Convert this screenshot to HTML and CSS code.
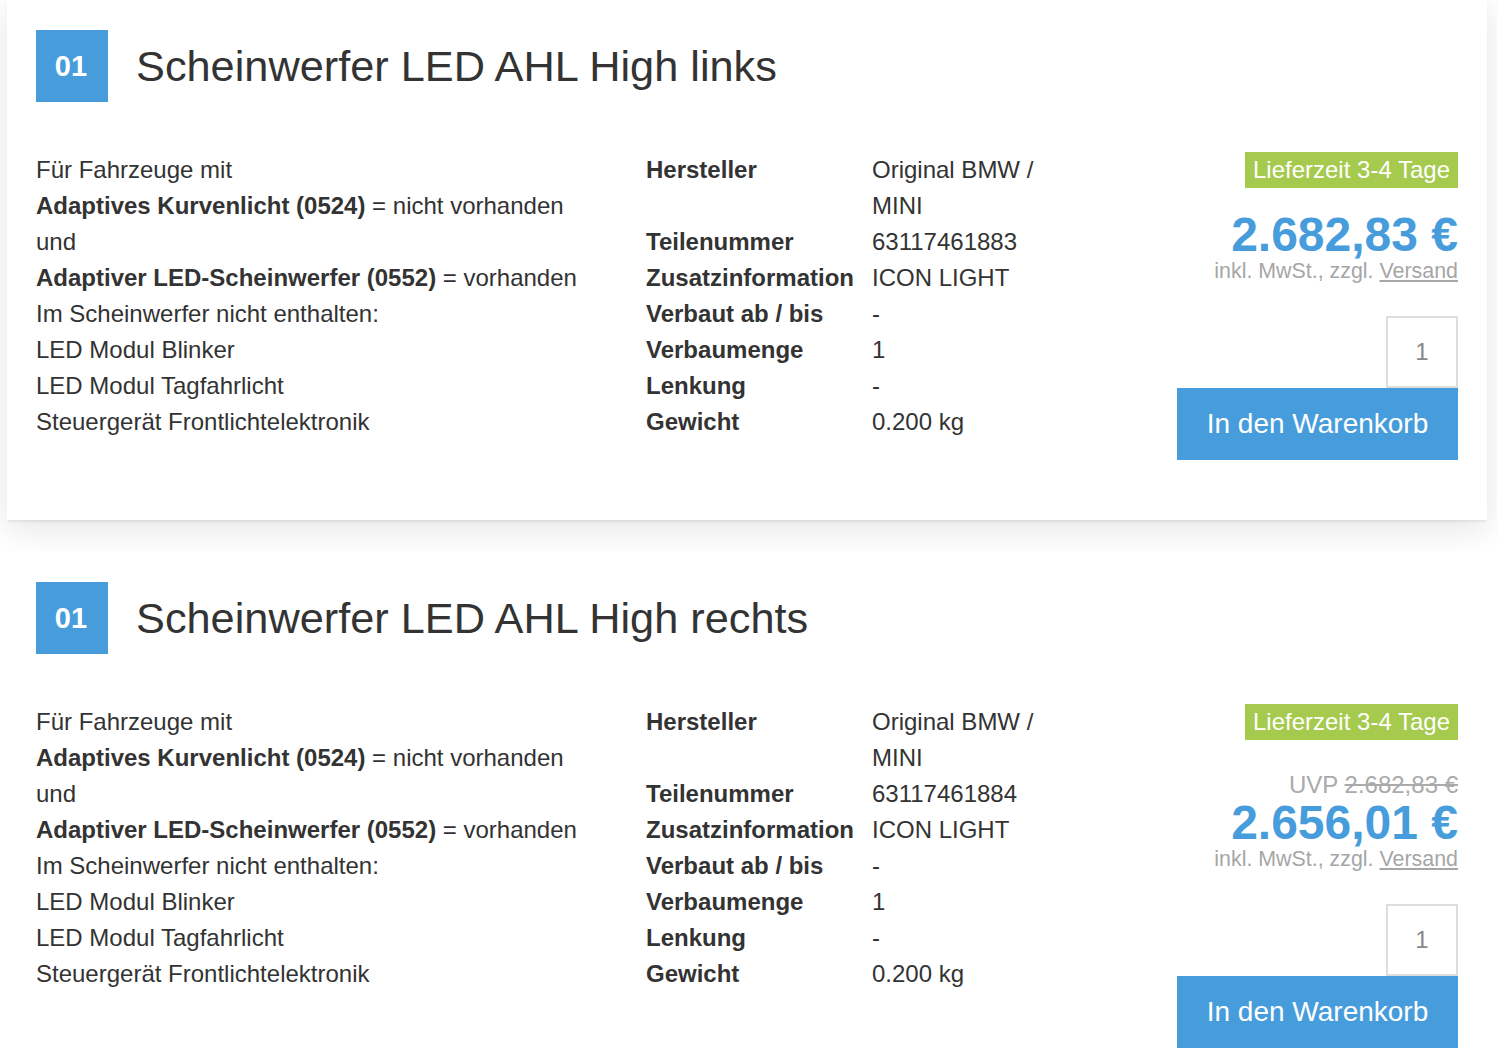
FILE: index.html
```html
<!DOCTYPE html>
<html lang="de">
<head>
<meta charset="utf-8">
<title>Scheinwerfer</title>
<link rel="stylesheet" href="styles.css">
</head>
<body>
<div class="list">
  <article class="card card-active">
    <header class="card-head">
      <div class="num">01</div>
      <h2 class="title">Scheinwerfer LED AHL High links</h2>
    </header>
    <div class="card-body">
      <div class="desc">
        <div>Für Fahrzeuge mit</div>
        <div><b>Adaptives Kurvenlicht (0524)</b> = nicht vorhanden</div>
        <div>und</div>
        <div><b>Adaptiver LED-Scheinwerfer (0552)</b> = vorhanden</div>
        <div>Im Scheinwerfer nicht enthalten:</div>
        <div>LED Modul Blinker</div>
        <div>LED Modul Tagfahrlicht</div>
        <div>Steuergerät Frontlichtelektronik</div>
      </div>
      <div class="specs">
        <div class="lbl">Hersteller</div><div class="val">Original BMW / MINI</div>
        <div class="lbl">Teilenummer</div><div class="val">63117461883</div>
        <div class="lbl">Zusatzinformation</div><div class="val">ICON LIGHT</div>
        <div class="lbl">Verbaut ab / bis</div><div class="val">-</div>
        <div class="lbl">Verbaumenge</div><div class="val">1</div>
        <div class="lbl">Lenkung</div><div class="val">-</div>
        <div class="lbl">Gewicht</div><div class="val">0.200 kg</div>
      </div>
      <div class="buy">
        <div class="delivery">Lieferzeit 3-4 Tage</div>
        <div class="price">2.682,83 €</div>
        <div class="tax">inkl. MwSt., zzgl. <a class="ship" href="#">Versand</a></div>
        <div class="qty">1</div>
        <button class="cart">In den Warenkorb</button>
      </div>
    </div>
  </article>

  <article class="card">
    <header class="card-head">
      <div class="num">01</div>
      <h2 class="title">Scheinwerfer LED AHL High rechts</h2>
    </header>
    <div class="card-body">
      <div class="desc">
        <div>Für Fahrzeuge mit</div>
        <div><b>Adaptives Kurvenlicht (0524)</b> = nicht vorhanden</div>
        <div>und</div>
        <div><b>Adaptiver LED-Scheinwerfer (0552)</b> = vorhanden</div>
        <div>Im Scheinwerfer nicht enthalten:</div>
        <div>LED Modul Blinker</div>
        <div>LED Modul Tagfahrlicht</div>
        <div>Steuergerät Frontlichtelektronik</div>
      </div>
      <div class="specs">
        <div class="lbl">Hersteller</div><div class="val">Original BMW / MINI</div>
        <div class="lbl">Teilenummer</div><div class="val">63117461884</div>
        <div class="lbl">Zusatzinformation</div><div class="val">ICON LIGHT</div>
        <div class="lbl">Verbaut ab / bis</div><div class="val">-</div>
        <div class="lbl">Verbaumenge</div><div class="val">1</div>
        <div class="lbl">Lenkung</div><div class="val">-</div>
        <div class="lbl">Gewicht</div><div class="val">0.200 kg</div>
      </div>
      <div class="buy">
        <div class="delivery">Lieferzeit 3-4 Tage</div>
        <div class="uvp">UVP <s>2.682,83 €</s></div>
        <div class="price price-uvp">2.656,01 €</div>
        <div class="tax">inkl. MwSt., zzgl. <a class="ship" href="#">Versand</a></div>
        <div class="qty">1</div>
        <button class="cart">In den Warenkorb</button>
      </div>
    </div>
  </article>
</div>
</body>
</html>
```

FILE: styles.css
```css
* { box-sizing: border-box; }

html, body {
  margin: 0;
  padding: 0;
  background: #ffffff;
  font-family: "Liberation Sans", Arial, sans-serif;
  color: #333333;
  overflow: hidden;
}

.list {
  padding: 0 10px 0 7px;
  display: flex;
  flex-direction: column;
  gap: 32px;
}

.card {
  background: #ffffff;
  padding: 30px 29px 60px 29px;
}

.card-active {
  box-shadow: 0 3px 2px -1px rgba(0, 0, 0, 0.07), 0 8px 34px rgba(0, 0, 0, 0.11);
}

.card-head {
  display: flex;
  align-items: center;
  gap: 28px;
}

.num {
  width: 72px;
  height: 72px;
  background: #479ddb;
  color: #ffffff;
  font-weight: bold;
  font-size: 29px;
  display: flex;
  align-items: center;
  justify-content: center;
  padding-right: 2px;
}

.title {
  margin: 0;
  font-size: 43.3px;
  font-weight: normal;
  color: #333333;
}

.card-body {
  display: flex;
  margin-top: 50px;
  font-size: 24px;
  line-height: 36px;
}

.desc {
  width: 610px;
  flex: none;
}

.desc b { font-weight: bold; }

.specs {
  display: grid;
  grid-template-columns: 226px 190px;
  align-content: start;
  flex: none;
}

.lbl { font-weight: bold; }

.buy {
  flex: 1;
  display: flex;
  flex-direction: column;
  align-items: flex-end;
}

.delivery {
  background: #a6ca4e;
  color: #ffffff;
  height: 36px;
  line-height: 36px;
  padding: 0 8px;
  font-size: 24px;
}

.uvp {
  margin-top: 23px;
  height: 36px;
  padding-top: 8px;
  line-height: 28px;
  font-size: 24px;
  color: #aaaaaa;
}

.uvp s { color: #aaaaaa; }

.price {
  margin-top: 23px;
  font-size: 48px;
  line-height: 48px;
  font-weight: bold;
  color: #479ddb;
}

.price-uvp { margin-top: 0; }

.tax {
  font-size: 21.4px;
  line-height: 25px;
  color: #a6a6a6;
}

.ship {
  color: #a6a6a6;
  text-decoration: underline;
}

.qty {
  margin-top: 32px;
  width: 72px;
  height: 72px;
  border: 2px solid #dddddd;
  display: flex;
  align-items: center;
  justify-content: center;
  font-size: 24px;
  color: #888888;
}

.cart {
  width: 281px;
  height: 72px;
  border: none;
  background: #479ddb;
  color: #ffffff;
  font-family: "Liberation Sans", Arial, sans-serif;
  font-size: 28px;
  padding: 0;
  cursor: pointer;
}
```
